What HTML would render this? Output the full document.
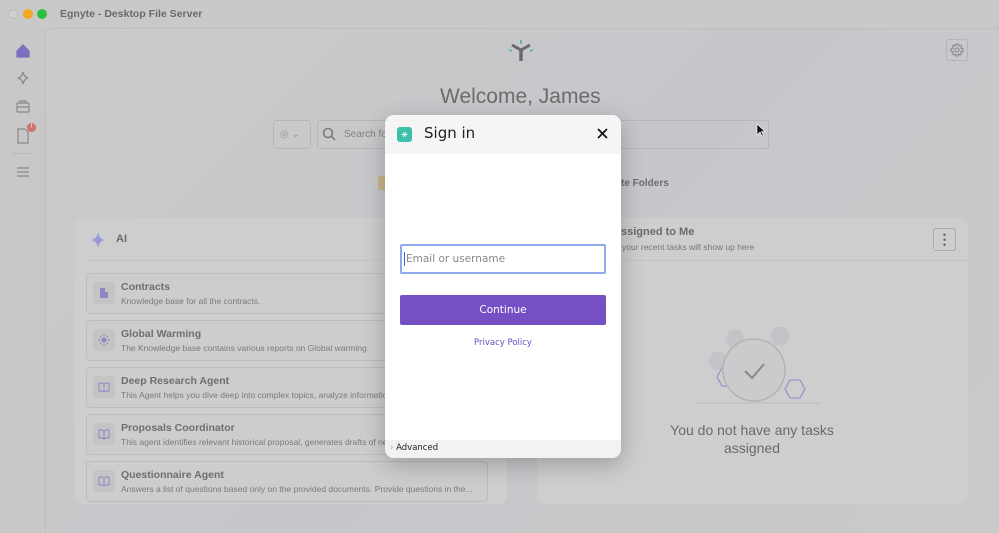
<!DOCTYPE html>
<html><head><meta charset="utf-8"><style>
*{box-sizing:border-box;margin:0;padding:0}
body{width:999px;height:533px;overflow:hidden;background:#c9c9c9;font-family:"Liberation Sans",sans-serif;position:relative}
.abs{position:absolute}
.title{left:0;top:0;width:999px;height:28px;background:#c9c9c9}
.dot{width:10px;height:10px;border-radius:50%;top:9px}
.side{left:0;top:28px;width:46px;height:505px;background:#c8c8c8;border-right:1px solid #bdbdbd}
.main{left:46px;top:28px;width:953px;height:505px;background:linear-gradient(135deg,#cbcbcb,#c6c7cb 50%,#cacaca);border-top-left-radius:8px;border-top:1px solid #bfbfbf}
.card{background:#cecece;border-radius:8px}
.item{left:86px;width:402px;height:41px;border:1px solid #bcbcbc;border-radius:4px;background:#cdcdcd}
.item .ic{position:absolute;left:6px;top:8px;width:22px;height:22px;background:#c4c4c4;border-radius:3px}
.item .ic svg{position:absolute;left:5px;top:5px}
.item b{position:absolute;left:34px;top:7px;font-size:10.5px;color:#6e6e6e}
.item span{position:absolute;left:34px;top:22px;font-size:8.5px;color:#7a7a7a;white-space:nowrap}
.modal{left:385px;top:115px;width:236px;height:343px;background:#fff;border-radius:9px;overflow:hidden;box-shadow:0 6px 24px rgba(0,0,0,.25)}
</style></head><body>
<div class="abs title"></div>
<div class="abs dot" style="left:8px;background:#cfcfcf;border:1px solid #bbb"></div>
<div class="abs dot" style="left:23px;background:#f5a623"></div>
<div class="abs dot" style="left:37px;background:#2cc13c"></div>
<div class="abs" style="left:60px;top:8px;font-size:10.5px;color:#6a6a6a;font-weight:bold">Egnyte - Desktop File Server</div>
<div class="abs side"></div>
<svg class="abs" style="left:14px;top:42px" width="18" height="140" viewBox="0 0 18 140" fill="none" stroke="#888" stroke-width="1.2">
<path d="M3 9 L9 3 L15 9 V15 H3Z" fill="#7d6fbf" stroke="#7d6fbf"/>
<path d="M9 30 Q10 35 14 36 Q10 37 9 42 Q8 37 4 36 Q8 35 9 30Z"/>
<rect x="3" y="61" width="12" height="9" rx="1"/><path d="M6 61V59H12V61M3 65H15"/>
<path d="M4 87H11L14 90V101H4Z"/>
<path d="M3 126H15M3 130H15M3 134H15"/>
</svg>
<div class="abs" style="left:27px;top:123px;width:9px;height:9px;border-radius:50%;background:#d07070;color:#fff;font-size:6px;text-align:center;line-height:9px">!</div>
<div class="abs" style="left:12px;top:153px;width:22px;height:1px;background:#b8b8b8"></div>
<div class="abs main"></div>
<svg class="abs" style="left:508px;top:39px" width="26" height="24" viewBox="0 0 26 24"><path d="M13 10V22" stroke="#666b73" stroke-width="3.5"/><path d="M4 6L13 11L22 6" stroke="#666b73" stroke-width="3" fill="none"/><path d="M13 1V5M1 11L4 12M25 11L22 12" stroke="#4cb3a4" stroke-width="1.6"/></svg>
<div class="abs" style="left:946px;top:39px;width:22px;height:22px;border:1px solid #b5b5b5;border-radius:3px"></div>
<svg class="abs" style="left:950px;top:43px" width="14" height="14" fill="none" stroke="#8a8a8a" stroke-width="1.1"><circle cx="7" cy="7" r="2"/><path d="M6 1H8L8.5 3 10.3 2 11.7 3.4 10.8 5.2 13 5.8V8.2L10.8 8.8 11.7 10.6 10.3 12 8.5 11 8 13H6L5.5 11 3.7 12 2.3 10.6 3.2 8.8 1 8.2V5.8L3.2 5.2 2.3 3.4 3.7 2 5.5 3Z"/></svg>
<div class="abs" style="left:440px;top:85px;font-size:21px;color:#6c6c6c">Welcome, James</div>
<div class="abs" style="left:273px;top:120px;width:38px;height:29px;border:1px solid #b7b7b7;border-radius:3px;color:#999;font-size:10px;line-height:27px;padding-left:6px">◎ ⌄</div>
<div class="abs" style="left:317px;top:120px;width:452px;height:29px;border:1px solid #b7b7b7;border-radius:3px"></div>
<svg class="abs" style="left:322px;top:127px" width="14" height="14" fill="none" stroke="#777" stroke-width="1.5"><circle cx="6" cy="6" r="4.5"/><path d="M9.5 9.5L13 13"/></svg>
<div class="abs" style="left:344px;top:129px;font-size:10px;color:#808080">Search fo</div>
<svg class="abs" style="left:756px;top:123px" width="9" height="14"><path d="M1 1V12L4 9L6 13L7.5 12.5L5.5 8.5H9Z" fill="#111" stroke="#fff" stroke-width=".6"/></svg>
<div class="abs" style="left:378px;top:176px;width:8px;height:14px;background:#c8b888;border-radius:2px"></div>
<div class="abs" style="left:621px;top:178px;font-size:10px;font-weight:bold;color:#6e6e6e">te Folders</div>
<div class="abs card" style="left:75px;top:218px;width:432px;height:286px"></div>
<div class="abs" style="left:86px;top:260px;width:410px;height:1px;background:#c4c4c4"></div>
<svg class="abs" style="left:90px;top:231px" width="16" height="18"><defs><linearGradient id="g" x1="0" y1="0" x2="1" y2="1"><stop offset="0" stop-color="#7aaee0"/><stop offset="1" stop-color="#b685c9"/></linearGradient></defs><path d="M8 1Q9 8 15 9Q9 10 8 17Q7 10 1 9Q7 8 8 1Z" fill="url(#g)"/></svg>
<div class="abs" style="left:116px;top:233px;font-size:11px;font-weight:bold;color:#6a6a6a">AI</div>
<div class="abs item" style="top:273px"><div class="ic"><svg width="12" height="12"><rect x="2" y="1" width="5" height="10" fill="#8f86c4"/><rect x="7" y="5" width="3" height="6" fill="#8f86c4"/></svg></div><b>Contracts</b><span>Knowledge base for all the contracts.</span></div>
<div class="abs item" style="top:320px"><div class="ic"><svg width="12" height="12" stroke="#8f86c4" stroke-width="1"><circle cx="6" cy="6" r="2" fill="#8f86c4"/><path d="M6 0V2.5M6 9.5V12M0 6H2.5M9.5 6H12M1.8 1.8L3.5 3.5M8.5 8.5L10.2 10.2M1.8 10.2L3.5 8.5M8.5 3.5L10.2 1.8"/></svg></div><b>Global Warming</b><span>The Knowledge base contains various reports on Global warming.</span></div>
<div class="abs item" style="top:367px"><div class="ic"><svg width="12" height="12" fill="none" stroke="#8f86c4" stroke-width="1"><path d="M6 3Q3.5 1.5 1 2V10Q3.5 9.5 6 11Q8.5 9.5 11 10V2Q8.5 1.5 6 3V11"/></svg></div><b>Deep Research Agent</b><span>This Agent helps you dive deep into complex topics, analyze information</span></div>
<div class="abs item" style="top:414px"><div class="ic"><svg width="12" height="12" fill="none" stroke="#8f86c4" stroke-width="1"><path d="M6 3Q3.5 1.5 1 2V10Q3.5 9.5 6 11Q8.5 9.5 11 10V2Q8.5 1.5 6 3V11"/></svg></div><b>Proposals Coordinator</b><span>This agent identifies relevant historical proposal, generates drafts of new</span></div>
<div class="abs item" style="top:461px"><div class="ic"><svg width="12" height="12" fill="none" stroke="#8f86c4" stroke-width="1"><path d="M6 3Q3.5 1.5 1 2V10Q3.5 9.5 6 11Q8.5 9.5 11 10V2Q8.5 1.5 6 3V11"/></svg></div><b>Questionnaire Agent</b><span>Answers a list of questions based only on the provided documents. Provide questions in the...</span></div>
<div class="abs card" style="left:537px;top:218px;width:431px;height:286px"></div>
<div class="abs" style="left:537px;top:260px;width:431px;height:1px;background:#c4c4c4"></div>
<div class="abs" style="left:621px;top:226px;font-size:11px;font-weight:bold;color:#6a6a6a">ssigned to Me</div>
<div class="abs" style="left:622px;top:242px;font-size:8.5px;color:#777">your recent tasks will show up here</div>
<div class="abs" style="left:933px;top:228px;width:23px;height:23px;border:1px solid #aaa;border-radius:3px;text-align:center;font-size:14px;line-height:20px;color:#555;font-weight:bold">⋮</div>
<svg class="abs" style="left:680px;top:320px" width="150" height="90" fill="none">
<path d="M50 10l10 0 5 9-5 9-10 0-5-9z M95 7l10 0 5 9-5 9-10 0-5-9z M33 32l10 0 5 9-5 9-10 0-5-9z" fill="#c4c4c8"/>
<path d="M42 48l10 0 5 9-5 9-10 0-5-9z M88 38l10 0 5 9-5 9-10 0-5-9z M110 60l10 0 5 9-5 9-10 0-5-9z" stroke="#9b97c8" stroke-width="1.3"/>
<circle cx="74" cy="50" r="31" fill="#cbcbcd" stroke="#b3b3b3" stroke-width="1.5"/>
<path d="M65 51l7 7 12-14" stroke="#8a8a8a" stroke-width="2"/>
<path d="M15 83H140" stroke="#bcbcbc"/></svg>
<div class="abs" style="left:640px;top:421px;width:224px;text-align:center;font-size:14px;color:#6a6a6a;line-height:18px">You do not have any tasks<br>assigned</div>
<div class="abs modal">
 <div class="abs" style="left:0;top:0;width:236px;height:39px;background:#f5f5f5"></div>
 <div class="abs" style="left:12px;top:12px;width:15px;height:15px;background:#3bc0aa;border-radius:3px;color:#fff;font-size:10px;text-align:center;line-height:15px">⚹</div>
 <div class="abs" style="left:39px;top:9px;font-size:15px;color:#222;font-family:'DejaVu Sans',sans-serif">Sign in</div>
 <svg class="abs" style="left:212px;top:13px" width="11" height="11"><path d="M1 1L10 10M10 1L1 10" stroke="#111" stroke-width="1.7"/></svg>
 <div class="abs" style="left:15px;top:129px;width:206px;height:30px;border:2px solid #8ea9ec;border-radius:2px"></div>
 <div class="abs" style="left:19px;top:137px;width:1px;height:14px;background:#3565e0"></div>
 <div class="abs" style="left:21px;top:138px;font-size:10.5px;color:#888;font-family:'DejaVu Sans',sans-serif">Email or username</div>
 <div class="abs" style="left:15px;top:180px;width:206px;height:30px;background:#7450c4;border-radius:2px;color:#fff;font-size:10.5px;text-align:center;line-height:30px;font-family:'DejaVu Sans',sans-serif">Continue</div>
 <div class="abs" style="left:0;top:223px;width:236px;text-align:center;font-size:8.5px;color:#6a4dc6;font-family:'DejaVu Sans',sans-serif">Privacy Policy</div>
 <div class="abs" style="left:0;top:325px;width:236px;height:18px;background:#f2f2f2"></div>
 <div class="abs" style="left:5px;top:328px;font-size:8.5px;color:#222;font-family:'DejaVu Sans',sans-serif"><span style="color:#999">›</span> Advanced</div>
</div>
</body></html>
